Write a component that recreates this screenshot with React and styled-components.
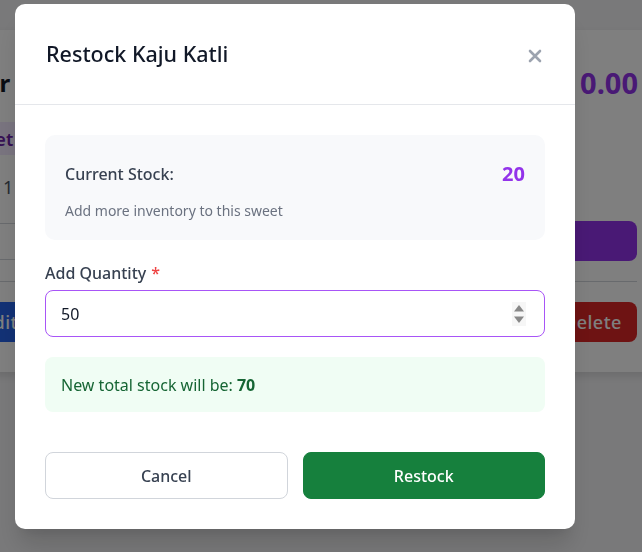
import React, { useState } from 'react';
import styled, { createGlobalStyle } from 'styled-components';

const GlobalStyle = createGlobalStyle`
  html, body {
    margin: 0;
    padding: 0;
    width: 642px;
    height: 552px;
    overflow: hidden;
    background: #f3f3f5;
    font-family: "Noto Sans", "Open Sans", sans-serif;
  }
  * { box-sizing: border-box; }
`;

// page behind the dialog
const Page = styled.div`
  padding-top: 30px;
  height: 552px;
  overflow: hidden;
`;

const SweetCard = styled.div`
  margin-left: -186px;
  width: 843px;
  background: #fff;
  border-radius: 10px;
  padding: 30px 20px 30px 20px;
  display: flex;
  flex-direction: column;
  box-shadow: 0 4px 10px rgba(0, 0, 0, 0.12);
`;

const CardHead = styled.div`
  display: flex;
  justify-content: space-between;
  align-items: center;
  height: 44px;
`;

const CardTitle = styled.h2`
  margin: 0;
  font-size: 24px;
  font-weight: 700;
  color: #111827;
`;

const Price = styled.span`
  font-size: 29px;
  font-weight: 700;
  color: #9333ea;
  margin-right: -1px;
`;

const CardMiddle = styled.div`
  display: flex;
  justify-content: space-between;
  align-items: flex-start;
`;

const LeftStack = styled.div`
  width: 204px;
  display: flex;
  flex-direction: column;
`;

const Tag = styled.span`
  align-self: flex-start;
  margin: 18px 0 0 114px;
  height: 33px;
  padding: 0 40px 0 12px;
  display: flex;
  align-items: center;
  background: #f3e8ff;
  color: #6b21a8;
  font-size: 18px;
  font-weight: 600;
  border-radius: 4px;
`;

const StockLine = styled.div`
  margin-top: 20px;
  padding-left: 114px;
  color: #4b5563;
  font-size: 18px;
  height: 30px;
`;

const Rule = styled.div`
  border-top: 1px solid #d1d5db;
  margin-top: ${(p) => p.$mt || 0}px;
`;

const BuyButton = styled.div`
  margin-top: 117px;
  width: 200px;
  height: 40px;
  background: #9333ea;
  border-radius: 8px;
`;

const ActionRow = styled.div`
  display: flex;
  justify-content: space-between;
  margin-top: 20px;
`;

const ActionButton = styled.div`
  height: 40px;
  width: ${(p) => p.$w}px;
  border-radius: 8px;
  background: ${(p) => p.$bg};
  color: #fff;
  font-size: 18px;
  font-weight: 500;
  display: flex;
  align-items: center;
  justify-content: ${(p) => p.$justify};
  padding: 0 16px 0 16px;
  letter-spacing: 0.5px;
`;

// dialog
const Overlay = styled.div`
  position: fixed;
  inset: 0;
  background: rgba(0, 0, 0, 0.5);
  display: flex;
  align-items: flex-start;
  justify-content: flex-start;
  padding: 4px 0 0 15px;
`;

const Dialog = styled.div`
  width: 560px;
  background: #fff;
  border-radius: 10px;
  box-shadow: 0 20px 25px -5px rgba(0, 0, 0, 0.15), 0 10px 10px -5px rgba(0, 0, 0, 0.06);
  overflow: hidden;
`;

const Header = styled.div`
  display: flex;
  align-items: center;
  justify-content: space-between;
  height: 101px;
  padding: 0 33px 0 31px;
  border-bottom: 1px solid #e5e7eb;
`;

const Title = styled.h3`
  margin: 0 0 2px;
  font-size: 21.5px;
  font-weight: 500;
  color: #111827;
`;

const CloseButton = styled.button`
  border: none;
  background: none;
  padding: 0;
  margin-top: 4px;
  cursor: pointer;
  display: flex;
`;

const Body = styled.div`
  padding: 30px 30px 30px;
  display: flex;
  flex-direction: column;
`;

const StockBox = styled.div`
  background: #f8f9fb;
  border-radius: 10px;
  padding: 25px 20px 20px;
`;

const StockRow = styled.div`
  display: flex;
  justify-content: space-between;
  align-items: center;
`;

const StockLabel = styled.span`
  font-size: 16px;
  font-weight: 500;
  color: #374151;
`;

const StockValue = styled.span`
  font-size: 20px;
  font-weight: 700;
  color: #9333ea;
`;

const Hint = styled.p`
  margin: 14px 0 0;
  font-size: 14px;
  color: #6b7280;
`;

const Label = styled.label`
  margin-top: 21px;
  font-size: 16px;
  font-weight: 500;
  color: #374151;
  line-height: 24px;
`;

const Required = styled.span`
  color: #ef4444;
  margin-left: 5px;
`;

const Field = styled.div`
  margin-top: 5px;
  height: 47px;
  border: 1px solid #a855f7;
  border-radius: 8px;
  display: flex;
  align-items: center;
  padding: 0 18px 0 15px;
`;

const NumberInput = styled.input`
  flex: 1;
  border: none;
  outline: none;
  font: inherit;
  font-size: 16px;
  color: #111827;
  background: transparent;
  padding: 0;
`;

const Preview = styled.div`
  margin-top: 20px;
  background: #f0fdf4;
  border-radius: 8px;
  height: 55px;
  display: flex;
  align-items: center;
  padding: 0 16px;
  font-size: 16px;
  color: #166534;
`;

const Strong = styled.strong`
  font-weight: 700;
  margin-left: 4px;
`;

const Footer = styled.div`
  display: flex;
  gap: 15px;
  margin-top: 40px;
`;

const Button = styled.button`
  flex: 1;
  height: 47px;
  border-radius: 8px;
  font: inherit;
  font-size: 16px;
  font-weight: 500;
  cursor: pointer;
  border: 1px solid ${(p) => (p.$primary ? '#15803d' : '#d1d5db')};
  background: ${(p) => (p.$primary ? '#16803d' : '#fff')};
  color: ${(p) => (p.$primary ? '#fff' : '#374151')};
`;

function CloseIcon() {
  return (
    <svg width="14" height="14" viewBox="0 0 14 14">
      <path d="M2 2 L12 12 M12 2 L2 12" stroke="#9ca3af" strokeWidth="2.6" strokeLinecap="round" />
    </svg>
  );
}

function SpinIcon() {
  return (
    <svg width="14" height="24" viewBox="0 0 14 24">
      <rect x="0" y="0" width="14" height="24" fill="#f6f6f6" />
      <path d="M7 3 L12 9.5 L2 9.5 Z" fill="#888" />
      <path d="M2 14.5 L12 14.5 L7 21 Z" fill="#888" />
    </svg>
  );
}

export default function App() {
  const [qty, setQty] = useState(50);
  const current = 20;

  return (
    <>
      <GlobalStyle />
      <Page>
        <SweetCard>
          <CardHead>
            <CardTitle>Sweet Counter</CardTitle>
            <Price>₹ 0.00</Price>
          </CardHead>
          <CardMiddle>
            <LeftStack>
              <Tag>Sweet</Tag>
              <StockLine>Stock: 1</StockLine>
              <Rule $mt={18} />
              <Rule $mt={35} />
            </LeftStack>
            <BuyButton />
          </CardMiddle>
          <Rule $mt={20} />
          <ActionRow>
            <ActionButton $w={200} $bg="#2563eb" $justify="flex-end">Edit</ActionButton>
            <ActionButton $w={90} $bg="#dc2626" $justify="flex-start">Delete</ActionButton>
          </ActionRow>
        </SweetCard>
      </Page>

      <Overlay>
        <Dialog>
          <Header>
            <Title>Restock Kaju Katli</Title>
            <CloseButton aria-label="Close">
              <CloseIcon />
            </CloseButton>
          </Header>
          <Body>
            <StockBox>
              <StockRow>
                <StockLabel>Current Stock:</StockLabel>
                <StockValue>{current}</StockValue>
              </StockRow>
              <Hint>Add more inventory to this sweet</Hint>
            </StockBox>

            <Label>
              Add Quantity<Required>*</Required>
            </Label>
            <Field>
              <NumberInput value={qty} onChange={(e) => setQty(e.target.value)} />
              <SpinIcon />
            </Field>

            <Preview>
              New total stock will be:<Strong>{current + Number(qty || 0)}</Strong>
            </Preview>

            <Footer>
              <Button>Cancel</Button>
              <Button $primary>Restock</Button>
            </Footer>
          </Body>
        </Dialog>
      </Overlay>
    </>
  );
}
